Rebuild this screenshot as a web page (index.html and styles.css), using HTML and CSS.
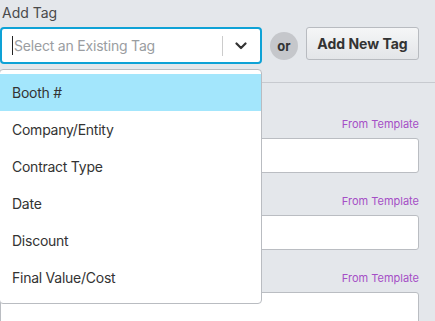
FILE: index.html
```html
<!DOCTYPE html>
<html>
<head>
<meta charset="utf-8">
<link rel="stylesheet" href="styles.css">
</head>
<body>
<div class="page">
  <div class="label">Add Tag</div>
  <div class="row">
    <div class="select-wrap">
      <div class="select">
        <span class="caret"></span>
        <span class="placeholder">Select an Existing Tag</span>
        <span class="sep"></span>
        <svg class="chev" width="12" height="8" viewBox="0 0 12 8"><path d="M1.5 1.5 L6 6 L10.5 1.5" fill="none" stroke="#333" stroke-width="2.2" stroke-linecap="round" stroke-linejoin="round"/></svg>
      </div>
      <div class="menu">
        <div class="item active">Booth #</div>
        <div class="item">Company/Entity</div>
        <div class="item">Contract Type</div>
        <div class="item">Date</div>
        <div class="item">Discount</div>
        <div class="item">Final Value/Cost</div>
      </div>
    </div>
    <div class="or">or</div>
    <button class="btn">Add New Tag</button>
  </div>
  <div class="divider"></div>
  <div class="fields">
    <div class="field"><div class="meta">From Template</div><div class="input"></div></div>
    <div class="field"><div class="meta">From Template</div><div class="input"></div></div>
    <div class="field"><div class="meta">From Template</div><div class="input"></div></div>
  </div>
</div>
</body>
</html>
```
FILE: styles.css
```css
html, body {
  margin: 0;
  padding: 0;
  background: #e4e7eb;
  font-family: "Inter", "Liberation Sans", sans-serif;
  overflow: hidden;
}
.page {
  width: 435px;
  height: 321px;
  padding-top: 4px;
  box-sizing: border-box;
}
.label {
  font-size: 14px;
  line-height: 17px;
  color: #4a4a4a;
  padding-left: 2px;
  margin-bottom: 6px;
}
.row {
  display: flex;
  align-items: center;
}
.select-wrap {
  position: relative;
  width: 262px;
}
.select {
  height: 37px;
  box-sizing: border-box;
  border: 2px solid #0ea2d6;
  border-radius: 4px;
  background: #fff;
  display: flex;
  align-items: center;
  padding-left: 10px;
}
.caret {
  width: 1px;
  height: 19px;
  background: #222;
  margin-right: 1px;
}
.placeholder {
  font-size: 14px;
  letter-spacing: -0.2px;
  color: #9a9da1;
  flex: 1;
}
.sep {
  width: 1px;
  height: 20px;
  background: #ccc;
}
.chev {
  margin: 0 13px 0 12px;
}
.menu {
  position: absolute;
  left: -1px;
  top: 42px;
  width: 263px;
  box-sizing: border-box;
  background: #fff;
  border: 1px solid #b9bcc1;
  border-radius: 4px;
  padding: 4px 0 7px;
  z-index: 2;
}
.item {
  height: 37px;
  line-height: 37px;
  padding-left: 12px;
  font-size: 14px;
  letter-spacing: -0.25px;
  color: #333;
}
.item.active {
  background: #a3e6fc;
}
.or {
  width: 28px;
  height: 28px;
  border-radius: 50%;
  background: #c5c7cb;
  color: #333;
  font-weight: 700;
  font-size: 13px;
  display: flex;
  align-items: center;
  justify-content: center;
  margin-left: 8px;
  margin-right: 8px;
}
.btn {
  align-self: flex-start;
  width: 113px;
  height: 33px;
  border: 1px solid #b8bbc0;
  border-radius: 3px;
  background: linear-gradient(#f5f6f7, #e3e5e8);
  font-family: inherit;
  font-weight: 700;
  font-size: 14px;
  color: #333;
  padding: 0;
}
.divider {
  height: 1px;
  background: #c7cacf;
  margin-top: 18px;
}
.fields {
  padding-top: 34px;
  width: 419px;
  display: flex;
  flex-direction: column;
  gap: 21px;
}
.meta {
  font-size: 11px;
  line-height: 14px;
  color: #a54fc6;
  text-align: right;
  margin-bottom: 7px;
}
.input {
  height: 35px;
  box-sizing: border-box;
  background: #fff;
  border: 1px solid #babdc2;
  border-radius: 3px;
}
```
